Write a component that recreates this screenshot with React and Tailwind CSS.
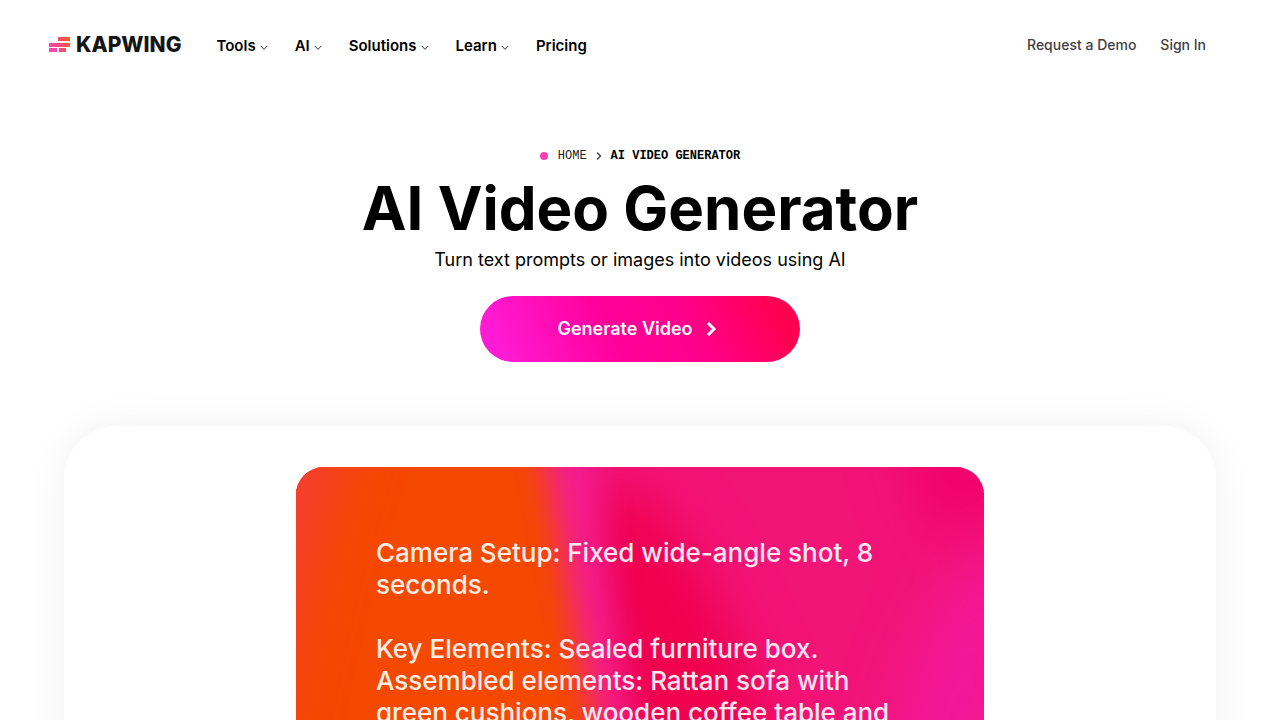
import React from "react";
import { ChevronRight } from "lucide-react";

const MENUS = ["Tools", "AI", "Solutions", "Learn"];

const PROMPT = [
  "Camera Setup: Fixed wide-angle shot, 8 seconds.",
  "Key Elements: Sealed furniture box. Assembled elements: Rattan sofa with green cushions, wooden coffee table and",
];

export default function App() {
  return (
    <div className="overflow-hidden bg-white font-['Inter',sans-serif] text-black">
      <Header />
      <main>
        <Hero />
        <section className="mx-16 flex justify-center rounded-t-[52px] bg-white px-10 pt-[41px] shadow-[0_0_40px_rgba(0,0,0,0.06)]">
          <PromptCard />
        </section>
      </main>
    </div>
  );
}

function Header() {
  return (
    <header className="flex h-[90px] items-center justify-between pr-[74px] pl-12">
      <div className="flex items-center gap-[35px]">
        <a href="#" className="flex items-center gap-[6px]">
          <LogoMark />
          <span className="text-[21px] leading-6 font-extrabold text-[#151515]">KAPWING</span>
        </a>
        <nav className="flex items-center gap-[27px] pt-px text-[15px] leading-5 font-semibold">
          {MENUS.map((label) => (
            <button key={label} type="button" className="flex items-center gap-1">
              {label}
              <SmallChevron />
            </button>
          ))}
          <a href="#">Pricing</a>
        </nav>
      </div>
      <div className="flex items-center gap-6 text-sm font-medium text-[#404044]">
        <a href="#">Request a Demo</a>
        <a href="#">Sign In</a>
      </div>
    </header>
  );
}

function Hero() {
  return (
    <div className="flex flex-col items-center pt-14 pb-16 text-center">
      <nav aria-label="Breadcrumb" className="flex items-center gap-1.5 font-['Liberation_Mono',monospace] text-xs leading-5">
        <span className="mr-1 size-2 rounded-full bg-[#fc3fb2]" />
        <a href="#" className="text-[#222]">HOME</a>
        <ChevronRight size={12} strokeWidth={3} className="text-[#444]" />
        <span className="font-bold">AI VIDEO GENERATOR</span>
      </nav>
      <h1 className="mt-1 text-[60px] leading-[76px] font-bold">AI Video Generator</h1>
      <p className="text-lg leading-7">Turn text prompts or images into videos using AI</p>
      <button type="button" className="mt-[22px] flex h-[66px] w-80 items-center justify-center gap-1.5 rounded-full bg-[linear-gradient(66deg,#ff1ad3_8%,#ff0099_42%,#ff008c_64%,#ff0050_92%)] text-lg font-semibold text-white">
        Generate Video
        <ChevronRight size={24} strokeWidth={3} strokeLinecap="butt" strokeLinejoin="miter" />
      </button>
    </div>
  );
}

function PromptCard() {
  return (
    <article className="relative w-full max-w-[688px] overflow-hidden rounded-t-[28px]">
      <CardArt />
      <div className="relative space-y-8 px-20 pt-[70px] pb-20 text-[26px] leading-8 font-medium text-white/90">
        {PROMPT.map((text) => <p key={text}>{text}</p>)}
      </div>
    </article>
  );
}

function LogoMark() {
  return (
    <svg width="22" height="16" viewBox="0 0 22 16" aria-hidden="true">
      <defs>
        <linearGradient id="brick" gradientUnits="userSpaceOnUse" x1="1" y1="12" x2="22" y2="4">
          <stop offset="0" stopColor="#fb42c4" />
          <stop offset="0.5" stopColor="#fa4a78" />
          <stop offset="1" stopColor="#ff5a22" />
        </linearGradient>
      </defs>
      <g fill="url(#brick)">
        <rect x="10" y="0" width="12" height="4" />
        <rect x="1" y="6" width="21" height="4" />
        <rect x="1" y="11" width="8" height="4" />
        <rect x="11" y="11" width="7" height="4" />
      </g>
    </svg>
  );
}

function SmallChevron() {
  return (
    <svg width="8" height="8" viewBox="0 0 8 8" fill="none" stroke="#333" className="mt-1" aria-hidden="true">
      <path d="M1 2.2 4 5.4 7 2.2" strokeLinecap="round" strokeLinejoin="round" />
    </svg>
  );
}

function CardArt() {
  return (
    <svg viewBox="0 0 688 340" preserveAspectRatio="none" className="absolute inset-0 size-full" aria-hidden="true">
      <defs>
        <filter id="soft" x="-50%" y="-50%" width="200%" height="200%" colorInterpolationFilters="sRGB">
          <feGaussianBlur stdDeviation="16" />
        </filter>
        <filter id="wide" x="-50%" y="-50%" width="200%" height="200%" colorInterpolationFilters="sRGB">
          <feGaussianBlur stdDeviation="28" />
        </filter>
      </defs>
      <rect width="688" height="340" fill="#f31478" />
      <g filter="url(#wide)">
        <path d="M290 30 350 20C400 90 470 190 510 400L340 400Z" fill="#f0004e" />
        <path d="M600-50H720V20L640 80Z" fill="#f0006a" />
        <path d="M720 60C620 150 590 230 600 400H720Z" fill="#f2189a" />
        <path d="M670 320 760 220V400Z" fill="#f52d4a" />
      </g>
      <g filter="url(#soft)">
        <path d="M230-60H292C298 70 325 240 356 400H270Z" fill="#f41d94" />
        <path d="M-60-60H236C266 60 281 200 334 400H-60Z" fill="#f54800" />
      </g>
      <path d="M-60-60H60C35 30 5 110-20 260H-60Z" fill="#f63d32" filter="url(#wide)" />
    </svg>
  );
}
